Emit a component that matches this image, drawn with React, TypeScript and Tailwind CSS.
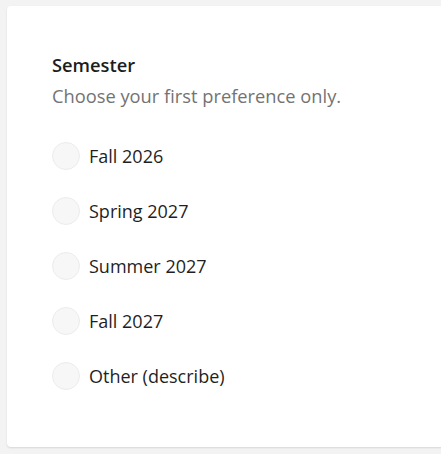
import React from "react";

const options = ["Fall 2026", "Spring 2027", "Summer 2027", "Fall 2027", "Other (describe)"];

export default function App() {
  return (
    <div
      className="min-h-[454px] w-[441px] overflow-hidden bg-[#f3f3f3] pl-[7px] pt-[6px]"
      style={{ fontFamily: '"Open Sans", sans-serif' }}
    >
      <div className="w-[460px] rounded-[4px] bg-white pb-[57px] pl-[45px] pt-[47px] shadow-[0_1px_2px_rgba(0,0,0,0.12)]">
        <div className="text-[18.3px] font-semibold leading-[24px] text-[#1c1c1c]">Semester</div>
        <div className="mt-[7px] text-[18.3px] leading-[24px] text-[#737373]">
          Choose your first preference only.
        </div>
        <div className="mt-[34px] flex flex-col gap-[27px]">
          {options.map((o) => (
            <label key={o} className="flex items-center gap-[9px]">
              <span className="h-[28px] w-[28px] rounded-full border border-[#ececec] bg-[#f7f7f7]" />
              <span className="text-[18px] leading-[24px] text-[#1f1f1f]">{o}</span>
            </label>
          ))}
        </div>
      </div>
    </div>
  );
}
